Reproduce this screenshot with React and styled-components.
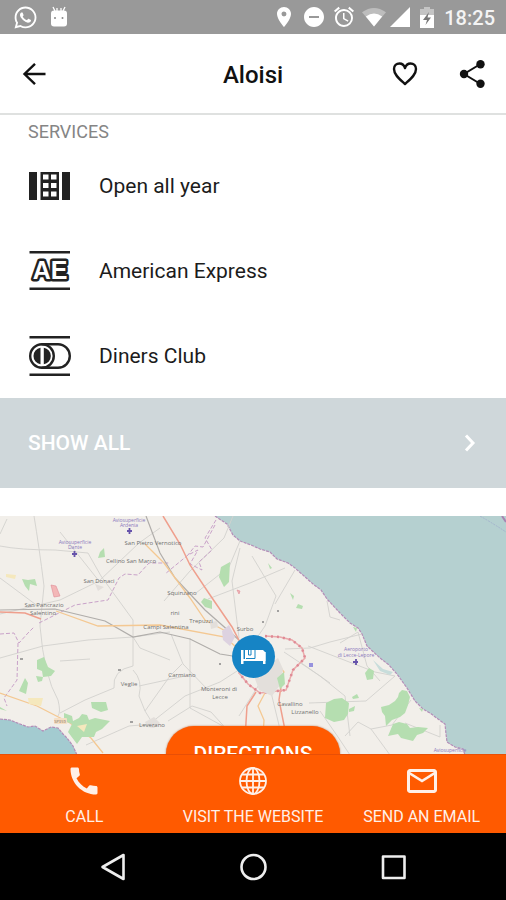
import React from 'react';
import styled, { createGlobalStyle } from 'styled-components';
import { MdPlace, MdDoNotDisturbOn, MdAccessAlarm, MdCall, MdMailOutline } from 'react-icons/md';
import { FaWhatsapp } from 'react-icons/fa';

const GlobalStyle = createGlobalStyle`
  * { box-sizing: border-box; }
  body { margin: 0; background: #fff; font-family: Roboto, "Liberation Sans", sans-serif; }
  button { font: inherit; border: 0; padding: 0; margin: 0; background: none; cursor: pointer; }
  svg { display: block; flex: none; }
`;

const Screen = styled.div`
  display: flex;
  flex-direction: column;
  min-height: 100vh;
  background: #fff;
  color: #1c1c1c;
`;

const StatusBar = styled.div`
  display: flex;
  align-items: center;
  justify-content: space-between;
  height: 34px;
  padding: 0 11px 0 13px;
  background: #999;
  color: #fff;
`;

const StatusGroup = styled.div`
  display: flex;
  align-items: center;
  gap: ${(p) => p.$gap}px;
`;

const Clock = styled.time`
  font-size: 20px;
  font-weight: 500;
  line-height: 24px;
  padding-top: 2px;
  margin-left: 4px;
  color: #f4f4f4;
`;

const Header = styled.header`
  display: grid;
  grid-template-columns: 1fr auto 1fr;
  align-items: center;
  height: 81px;
  padding: 0 20px;
  border-bottom: 2px solid #dfe1e0;
  color: #111;
`;

const Title = styled.h1`
  margin: 0;
  font-size: 24px;
  font-weight: 500;
  line-height: 28px;
  padding-top: 3px;
`;

const IconButton = styled.button`
  display: flex;
  color: inherit;
`;

const HeaderActions = styled.div`
  display: flex;
  justify-content: flex-end;
  gap: 40px;
`;

const SectionTitle = styled.h2`
  margin: 0;
  padding: 7px 28px 1px;
  font-size: 18px;
  font-weight: 400;
  line-height: 20px;
  color: #858585;
`;

const ServiceList = styled.ul`
  list-style: none;
  margin: 0;
  padding: 0 28px;
`;

const Service = styled.li`
  display: flex;
  align-items: center;
  gap: 28px;
  height: 85px;
  font-size: 21px;
  line-height: 24px;
`;

const ShowAll = styled.button`
  display: flex;
  align-items: center;
  justify-content: space-between;
  height: 90px;
  padding: 0 30px 0 28px;
  background: #cfd7da;
  color: #fff;
  font-size: 21px;
  font-weight: 500;
`;

const MapPanel = styled.section`
  position: relative;
  flex: 1;
  display: flex;
  min-height: 238px;
  margin-top: 28px;
  overflow: hidden;
  background: #f2efea;
`;

const MapCanvas = styled.svg`
  width: 100%;
  height: auto;
  min-height: 100%;
  flex: 1;
  font-family: "Open Sans", Roboto, sans-serif;
`;

const Directions = styled.button`
  position: absolute;
  left: 50%;
  bottom: -28px;
  transform: translateX(-50%);
  width: 174px;
  height: 56px;
  border-radius: 28px;
  background: #ff5a00;
  color: #fff;
  font-size: 21px;
  font-weight: 500;
  box-shadow: 0 0 2px #b8704a;
`;

const ActionBar = styled.nav`
  display: grid;
  grid-template-columns: repeat(3, 1fr);
  height: 79px;
  background: #ff5a00;
  border-top: 1px solid #e84f06;
`;

const Action = styled.a`
  display: flex;
  flex-direction: column;
  align-items: center;
  padding-top: 8px;
  gap: 8px;
  color: #fff0e8;
  text-decoration: none;
  font-size: 16px;
  line-height: 20px;
  white-space: nowrap;
`;

const SystemNav = styled.nav`
  display: flex;
  align-items: center;
  justify-content: center;
  gap: 110px;
  height: 67px;
  background: #000;
`;

const AndroidIcon = () => (
  <svg width="18" height="22" viewBox="0 0 18 22" fill="#fff">
    <path d="M3 1l2 4M15 1l-2 4M7 2v3M11 2v3" stroke="#fff" strokeWidth="1.3" />
    <rect x="1" y="4.500" width="16" height="16" rx="3" />
    <circle cx="5" cy="12" r="1" fill="#888" /><circle cx="12.500" cy="12" r="1" fill="#888" />
  </svg>
);
const WifiIcon = () => (
  <svg width="24" height="22" viewBox="0 0 25 22">
    <path d="M0 6Q12.500-3 25 6L12.500 21Z" fill="#bdbdbd" />
    <path d="M4 10.500Q12.500 4 21 10.500L12.500 21Z" fill="#fff" />
  </svg>
);
const SignalIcon = () => <svg width="20" height="20" viewBox="0 0 20 20"><path d="M20 0v20H0Z" fill="#fff" /></svg>;
const BatteryIcon = () => (
  <svg width="14" height="21" viewBox="0 0 14 21">
    <path d="M4 0h6v2h4v7H0V2h4Z" fill="#c4c4c4" /><path d="M0 8h14v13H0Z" fill="#fff" />
    <path d="M9 5L3 13h4l-1.500 5L11 10.500H7.500Z" fill="#777" />
  </svg>
);
const BackIcon = () => (
  <svg width="28" height="28" viewBox="0 0 28 28" fill="none" stroke="currentColor" strokeWidth="2.400">
    <path d="M25.500 14H4.500M15 3.800L4.500 14 15 24.200" />
  </svg>
);
const HeartIcon = () => (
  <svg width="26" height="28" viewBox="0 0 26 28" fill="none" stroke="currentColor" strokeWidth="2.400" strokeLinejoin="round">
    <path d="M13 25C8 20.500 2 16 2 10C2 6.500 4.500 4.500 7.500 4.500C10 4.500 12 6 13 9C14 6 16 4.500 18.500 4.500C21.500 4.500 24 6.500 24 10C24 16 18 20.500 13 25Z" />
  </svg>
);
const ShareIcon = () => (
  <svg width="28" height="30" viewBox="0 0 28 30" fill="currentColor">
    <path d="M22.500 5L6 15l16.500 10" fill="none" stroke="currentColor" strokeWidth="2" />
    <circle cx="22.500" cy="5.200" r="4.200" /><circle cx="6" cy="15" r="4.200" /><circle cx="22.500" cy="24.800" r="4.200" />
  </svg>
);

const CalendarIcon = () => (
  <svg width="43" height="42" viewBox="0 0 43 42" fill="#222">
    <path d="M1 7h8v28H1ZM34 7h8v28h-8Z" />
    <path fillRule="evenodd" d="M12.500 7h18.500v28H12.500ZM15 9.500v5h5.500v-5ZM23 9.500v5h5.500v-5ZM15 18v5h5.500v-5ZM23 18v5h5.500v-5ZM15 26.500v5h5.500v-5ZM23 26.500v5h5.500v-5Z" />
  </svg>
);

const CardMonogram = styled.text`
  font-family: "Liberation Sans", sans-serif;
  font-size: 25px;
  font-weight: 700;
  text-anchor: middle;
  fill: #fff;
  stroke: #222;
  stroke-width: 5px;
  stroke-linejoin: round;
  paint-order: stroke;
`;

const AmexIcon = () => (
  <svg width="43" height="42" viewBox="0 0 43 42" aria-hidden="true">
    <path d="M1.500 2.300h40.500M1.500 38.700h40.500" stroke="#222" strokeWidth="2.600" />
    <CardMonogram x="22" y="29">AE</CardMonogram>
  </svg>
);
const DinersIcon = () => (
  <svg width="43" height="42" viewBox="0 0 43 42" fill="none" stroke="#222" strokeWidth="2.400">
    <path d="M1.500 2.300h40.500M1.500 39.700h40.500" strokeWidth="2.600" />
    <path d="M13.500 9.200H30a11.800 11.800 0 0 1 0 23.600H13.500" />
    <circle cx="14" cy="21" r="11.800" />
    <path d="M12.500 12.800a8.300 8.300 0 0 0 0 16.400ZM15.800 12.800a8.300 8.300 0 0 1 0 16.400Z" fill="#222" stroke="none" />
  </svg>
);
const ChevronIcon = () => (
  <svg width="12" height="18" viewBox="0 0 12 18" fill="none" stroke="#fff" strokeWidth="3"><path d="M2 1.500L9 9l-7 7.500" /></svg>
);
const GlobeIcon = () => (
  <svg width="36" height="36" viewBox="0 0 36 36" fill="none" stroke="#fff0e8" strokeWidth="1.800">
    <circle cx="18" cy="18" r="13" /><ellipse cx="18" cy="18" rx="6.500" ry="13" />
    <path d="M18 5v26M5 18h26M7 11.500h22M7 24.500h22" />
  </svg>
);

const places = [
  ['San Pietro Vernotico', 153, 29], ['Cellino San Marco', 131, 47], ['San Donaci', 99, 67],
  ['San Pancrazio', 44, 91], ['Salentino', 43, 99], ['Campi Salentina', 166, 113], ['Squinzano', 182, 79],
  ['Trepuzzi', 201, 107], ['Surbo', 245, 115], ['Carmiano', 182, 161], ['Monteroni di', 219, 175],
  ['Lecce', 220, 183], ['Veglie', 129, 170], ['Leverano', 152, 211], ['Cavallino', 290, 190],
  ['Lizzanello', 305, 198], ['rini', 175, 99],
];
const airfields = [
  ['Aviosuperficie', 129, 6], ['Ardenia', 129, 11], ['Aviosuperficie', 75, 28], ['Dante', 75, 33],
  ['Aeroporto', 356, 135], ['di Lecce-Lepore', 356, 141], ['Aviosuperficie', 450, 236],
];
const coast = 'M215 0L227 8 233 19 240 25 251 29 260 33 270 36 277 43 288 47 295 52 304 60 313 68 321 74 327 83 340 97 350 107 358 112 362 118 367 130 380 142 389 149 397 158 407 172 415 185 423 193 430 197 438 203 445 208 446 218 447 226 455 231 463 233 465 239';
const southCoast = 'M0 203L10 204 20 208 28 211 35 210 43 215 51 211 58 212 63 218 67 222 73 230 77 239';

const AreaMap = () => (
  <MapCanvas viewBox="0 0 506 238" preserveAspectRatio="xMidYMid slice" role="img" aria-label="Map of the area around Lecce">
    <path d="M0 0h506v239H0Z" fill="#f2efea" />
    <path d={`${coast}L506 239V0Z`} fill="#b5d0d0" />
    <path d={`${southCoast}L0 239Z`} fill="#a3cbd0" />
    <g fill="none" stroke="#b48db8" strokeWidth="1.200" strokeDasharray="3 1">
      <path d={coast} /><path d={southCoast} />
    </g>
    <path d="M480 0Q494 8 506 16" fill="none" stroke="#a0adcb" strokeWidth="0.800" strokeDasharray="2 1" />
    <path d="M502 0l4 6" stroke="#a783b2" strokeWidth="2" />
    <g fill="none" stroke="#d3d1ce" strokeWidth="0.900">
      <path d="M0 30Q20 34 55 34L88 37 101 60 133 104V150Q112 154 114 172" />
      <path d="M34 0Q39 30 44 70L40 110Q44 160 58 184Q61 196 58 200" />
      <path d="M0 18L7 3M60 16L99 65L60 84L0 98M99 65L139 27 160 12M0 62L39 91" />
      <path d="M0 142L43 130 88 124 133 121 170 116M133 121L140 132 170 144" />
      <path d="M133 154Q143 164 139 180L145 195 153 208 129 210 86 229" />
      <path d="M145 195L170 160 182 148M152 206L185 180 220 166 248 148" />
      <path d="M60 197L85 184 114 172M139 170L185 160M190 122v70L230 214" />
      <path d="M233 0L224 22 190 55 164 85M240 25L229 51 196 77M240 32L232 65 239 122" />
      <path d="M208 83L250 67 285 52M252 40L276 80 265 110 250 132M295 54L275 88" />
      <path d="M327 85L330 101 340 104M362 118L330 126 310 132 285 133M340 127L358 116" />
      <path d="M308 130L375 156 395 160M284 136L320 160 345 180 350 220" />
      <path d="M262 164L239 200M268 164L278 205 286 239M300 146L330 167M309 187L366 185 395 160" />
      <path d="M345 220L358 206 371 213 392 209 411 184M371 213L390 239M405 207L440 221V209" />
      <path d="M358 116L367 150 380 165M320 195L338 221 350 239M60 145L90 143" />
      <path d="M168 205L192 190 211 196 230 217M171 118L183 148 209 175" />
    </g>
    <g fill="none" stroke="#c9a2c9" strokeWidth="1" strokeDasharray="4 2">
      <path d="M39 107L75 89 108 84 119 62 125 58 138 59 149 47 170 47" />
      <path d="M0 118L14 117 19 127 28 117 34 111M18 127L17 164 4 182 7 190" />
      <path d="M216 4L205 22 212 34 199 46 202 54 190 48 198 34 188 39 165 58" />
      <path d="M215 9L203 31 195 30 188 39" />
    </g>
    <g fill="none" stroke="#b0adaa" strokeWidth="1.200">
      <path d="M0 94L55 93 105 105 133 121 160 116 190 123 220 138 239 141" />
      <path d="M146 0L160 37 175 62 205 94 239 124" />
    </g>
    <g fill="none" stroke="#f4c892" strokeWidth="1.300">
      <path d="M56 95L98 110 160 109 225 121 237 132M145 28L164 47 190 82 205 104 233 119" />
      <path d="M0 177L37 190 70 207 91 222 103 237M278 148L284 156 277 167M262 238L264 204 258 190 266 175" />
    </g>
    <g fill="none" stroke="#ef9f8d" strokeWidth="1.500">
      <path d="M163 0L180 28 190 49 208 76 232 111 243 132M0 96L25 97 41 103" />
      <path d="M244 239L247 190 256 176M281 170L279 184 290 239M272 154L280 162 281 176" />
    </g>
    <path d="M265 120L280 121 292 124 302 132 305 142 293 154 286 174 260 177 248 168 239 157 237 138" fill="none" stroke="#eaa9aa" strokeWidth="1.500" />
    <path d="M265 120L280 121 292 124 302 132 305 142 293 154 286 174 260 177 248 168 239 157" fill="none" stroke="#df8995" strokeDasharray="2 4" strokeWidth="2.500" />
    <g fill="#e3dfdb">
      <path d="M222 115l7-6 6 12-5 9-7-6Z" fill="#ddd2e0" />
      <path d="M254 160l12-9 12-9 5 11-3 16-8 11-13-6ZM145 206l9-5 6 6-6 5-7-1ZM210 106l7-1 1 6-7 2ZM95 68l9 3-6 4Z" />
    </g>
    <g fill="#b5deb0">
      <path d="M221 51l9-5-1 20-5 5-5-10ZM204 82l8 3 0 8-7-2-4-5ZM268 47l4 5-2 1ZM290 77l4 3-1 4ZM298 88l5 2-1 3-6-1Z" />
      <path d="M22 63l6 1 7-1 2 7-7-2-1 7-4-5ZM100 36l4-4 1 9-7 1ZM37 144l7-3 4 10 7 4-4 5-8 1-1-6-5-2ZM36 160l7 1-1 4-4 1ZM25 162l3 5-2 11-7-3Z" />
      <path d="M91 186l15 0 2 8-7 2-9-4ZM64 197l8 3 1 5 6-3 3-4 5 1 2 5 6-2 15 3-8 8-6 3-2 5-12 0-5 7-9-12 4-8-8-3Z" />
      <path d="M381 191l8-2 6-4 3-4 1-4 3-3 5 1 3 6-2 8-3 8-5 4-8 3-6 6-1-10-3-4Z" />
      <path d="M388 220l5-12 6-2 8 2 3 4 8-1 10 1-5 5-6 2-4 6-12-3-3-4Z" />
      <path d="M326 187l8-4 8-1 7 5-1 11-4 6-10 2-9-4Z" />
      <path d="M352 181l5-3 2 4-6 1ZM349 193l6-3-1 5-5 1ZM365 157l4-5 5 3-1 8-6 1Z" />
      <path d="M277 162l7-6 1 12-5 5ZM353 111l4 1-1 4ZM419 192l4 1-1 3ZM0 191l7 4-7-2Z" />
    </g>
    <path d="M6 58l10 1-1 4-9-2ZM28 182l15 0-2 8-12-2ZM77 210l10-2-3 8Z" fill="#f5e8bd" />
    <path d="M51 69l5 1 4 10-6 1ZM237 74l3 1-1 3Z" fill="#f3b7b7" stroke="#df8995" strokeWidth="0.600" />
    <path d="M373 144l10 9 10 3-3 3-10-4Z" fill="#c8dddb" />
    <g fill="#707070" fontSize="6" textAnchor="middle">
      {places.map(([name, x, y]) => <text key={name} x={x} y={y}>{name}</text>)}
    </g>
    <g fill="#8a78bd" fontSize="5" textAnchor="middle">
      {airfields.map(([name, x, y]) => <text key={`${name}${x}`} x={x} y={y}>{name}</text>)}
    </g>
    <path d="M127 15h5M129.500 12v6M72 38h5M74.500 35v6M353 146h5M356 143v6" stroke="#6653ab" strokeWidth="1.800" />
    <rect x="309" y="147" width="4" height="4" fill="#9792dd" />
    <rect x="54" y="202" width="13" height="6" rx="1" fill="#f5dfc5" />
    <text x="60" y="207" fontSize="4" textAnchor="middle" fill="#806e59">SP359</text>
    <path d="M20 143h3M118 154h3M130 206h3M262 106h2M277 95h2M219 148h2" stroke="#888" strokeWidth="1.500" />
    <circle cx="253.500" cy="140.500" r="21.500" fill="#1684c5" />
    <path d="M241 134h2.500v9H263v-7h2.500v12H263v-3H243.500v3H241Z" fill="#fff" />
    <path d="M245 134h18l2.500 2.500V145H245Z" fill="#fff" />
    <path d="M248.500 134v5h2.500v-5M246 142.500h9V134" fill="none" stroke="#1684c5" strokeWidth="1" />
  </MapCanvas>
);

const services = [
  { name: 'Open all year', Icon: CalendarIcon },
  { name: 'American Express', Icon: AmexIcon },
  { name: 'Diners Club', Icon: DinersIcon },
];

export default function App() {
  return (
    <Screen>
      <GlobalStyle />
      <StatusBar>
        <StatusGroup $gap={12}><FaWhatsapp size={25} /><AndroidIcon /></StatusGroup>
        <StatusGroup $gap={6}>
          <MdPlace size={24} /><MdDoNotDisturbOn size={24} /><MdAccessAlarm size={24} />
          <StatusGroup $gap={4}><WifiIcon /><SignalIcon /></StatusGroup>
          <StatusGroup $gap={4}><StatusGroup $gap={0} /><BatteryIcon /></StatusGroup>
          <Clock>18:25</Clock>
        </StatusGroup>
      </StatusBar>
      <Header>
        <IconButton aria-label="Back"><BackIcon /></IconButton>
        <Title>Aloisi</Title>
        <HeaderActions>
          <IconButton aria-label="Add to favourites"><HeartIcon /></IconButton>
          <IconButton aria-label="Share"><ShareIcon /></IconButton>
        </HeaderActions>
      </Header>
      <SectionTitle>SERVICES</SectionTitle>
      <ServiceList>
        {services.map(({ name, Icon }) => <Service key={name}><Icon />{name}</Service>)}
      </ServiceList>
      <ShowAll>SHOW ALL<ChevronIcon /></ShowAll>
      <MapPanel>
        <AreaMap />
        <Directions>DIRECTIONS</Directions>
      </MapPanel>
      <ActionBar aria-label="Contact">
        <Action href="#call"><MdCall size={36} />CALL</Action>
        <Action href="#website"><GlobeIcon />VISIT THE WEBSITE</Action>
        <Action href="#email"><MdMailOutline size={36} />SEND AN EMAIL</Action>
      </ActionBar>
      <SystemNav aria-label="System">
        <IconButton aria-label="Go back">
          <svg width="30" height="30" viewBox="0 0 30 30" fill="none" stroke="#eee" strokeWidth="2.600" strokeLinejoin="round"><path d="M4.500 15L25.500 3v24Z" /></svg>
        </IconButton>
        <IconButton aria-label="Home">
          <svg width="30" height="30" viewBox="0 0 30 30" fill="none" stroke="#eee" strokeWidth="2.600"><circle cx="15.500" cy="15" r="12" /></svg>
        </IconButton>
        <IconButton aria-label="Recent apps">
          <svg width="30" height="30" viewBox="0 0 30 30" fill="none" stroke="#eee" strokeWidth="2.600" strokeLinejoin="round"><rect x="5" y="4.500" width="21.500" height="21.500" /></svg>
        </IconButton>
      </SystemNav>
    </Screen>
  );
}
